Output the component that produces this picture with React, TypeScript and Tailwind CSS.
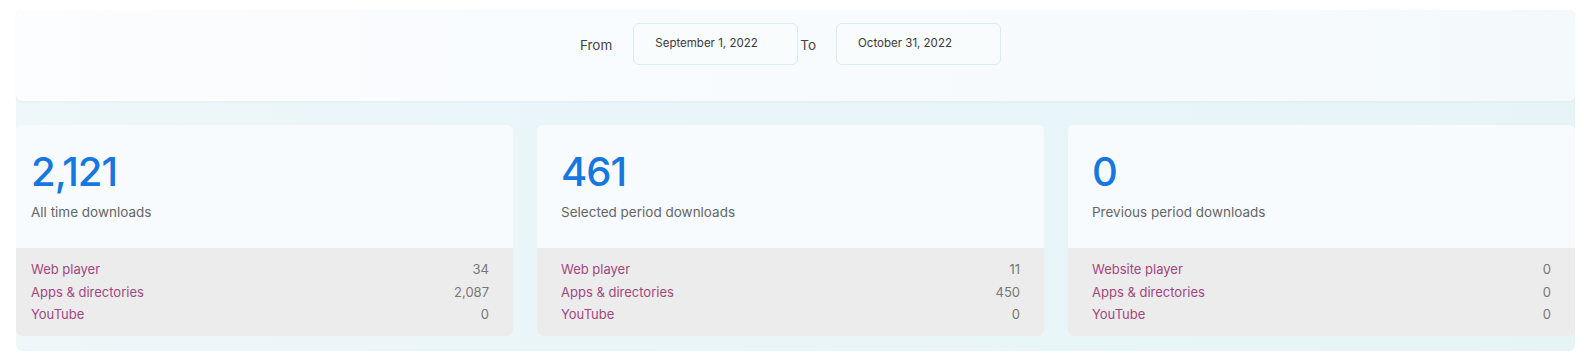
const stats = [
  {
    total: "2,121",
    label: "All time downloads",
    rows: [
      { name: "Web player", value: "34" },
      { name: "Apps & directories", value: "2,087" },
      { name: "YouTube", value: "0" },
    ],
  },
  {
    total: "461",
    label: "Selected period downloads",
    rows: [
      { name: "Web player", value: "11" },
      { name: "Apps & directories", value: "450" },
      { name: "YouTube", value: "0" },
    ],
  },
  {
    total: "0",
    label: "Previous period downloads",
    rows: [
      { name: "Website player", value: "0" },
      { name: "Apps & directories", value: "0" },
      { name: "YouTube", value: "0" },
    ],
  },
];

const DateBox = ({ value }: { value: string }) => (
  <div className="flex items-center w-[165px] h-[42px] px-[21px] text-[11.5px] text-[#3a3a3a] border border-[#d9edf3] rounded-[6px] bg-[#f8fcfd]">
    {value}
  </div>
);

const App = () => {
  return (
    <div className="min-h-screen bg-white pl-4 pr-[9px] pt-[10px] font-['Inter',sans-serif]">
      <div className="rounded-[6px] bg-gradient-to-r from-[#eef7fa] via-[#e9f5f9] to-[#e6f4f8]">

        {/* Date range */}
        <div className="flex items-start justify-center h-[91px] pt-[13px] pr-[10px] rounded-[6px] bg-gradient-to-r from-[#fbfdfe] to-[#f4f9fc] shadow-[0_1px_2px_rgba(200,225,235,0.35)]">
          <span className="mt-[12px] mr-[21px] text-[13.5px] text-[#444]">From</span>
          <DateBox value="September 1, 2022" />
          <span className="mt-[12px] ml-[2px] mr-[20px] text-[13.5px] text-[#444]">To</span>
          <DateBox value="October 31, 2022" />
        </div>

        <div className="grid grid-cols-[497px_1fr_1fr] gap-6 pt-6 pb-[15px]">
          {stats.map((s, i) => (
            <div key={s.label} className="overflow-hidden rounded-[6px] bg-[#f7fbfd]">
              <div className={`h-[123px] pt-[23px] ${i === 0 ? "pl-[15px]" : "pl-6"}`}>
                <div className="text-[40px] leading-[48px] font-medium tracking-[-1px] text-[#1677e0]">
                  {s.total}
                </div>
                <div className="mt-[6px] text-[13.5px] leading-[20px] text-[#666]">
                  {s.label}
                </div>
              </div>
              <div className={`py-[10px] pr-6 bg-[#ececec] ${i === 0 ? "pl-[15px]" : "pl-6"}`}>
                {s.rows.map((r) => (
                  <div key={r.name} className="flex justify-between text-[13px] leading-[22.5px]">
                    <span className="text-[#a2477f]">{r.name}</span>
                    <span className="text-[#777]">{r.value}</span>
                  </div>
                ))}
              </div>
            </div>
          ))}
        </div>

      </div>
    </div>
  );
};

export default App;
